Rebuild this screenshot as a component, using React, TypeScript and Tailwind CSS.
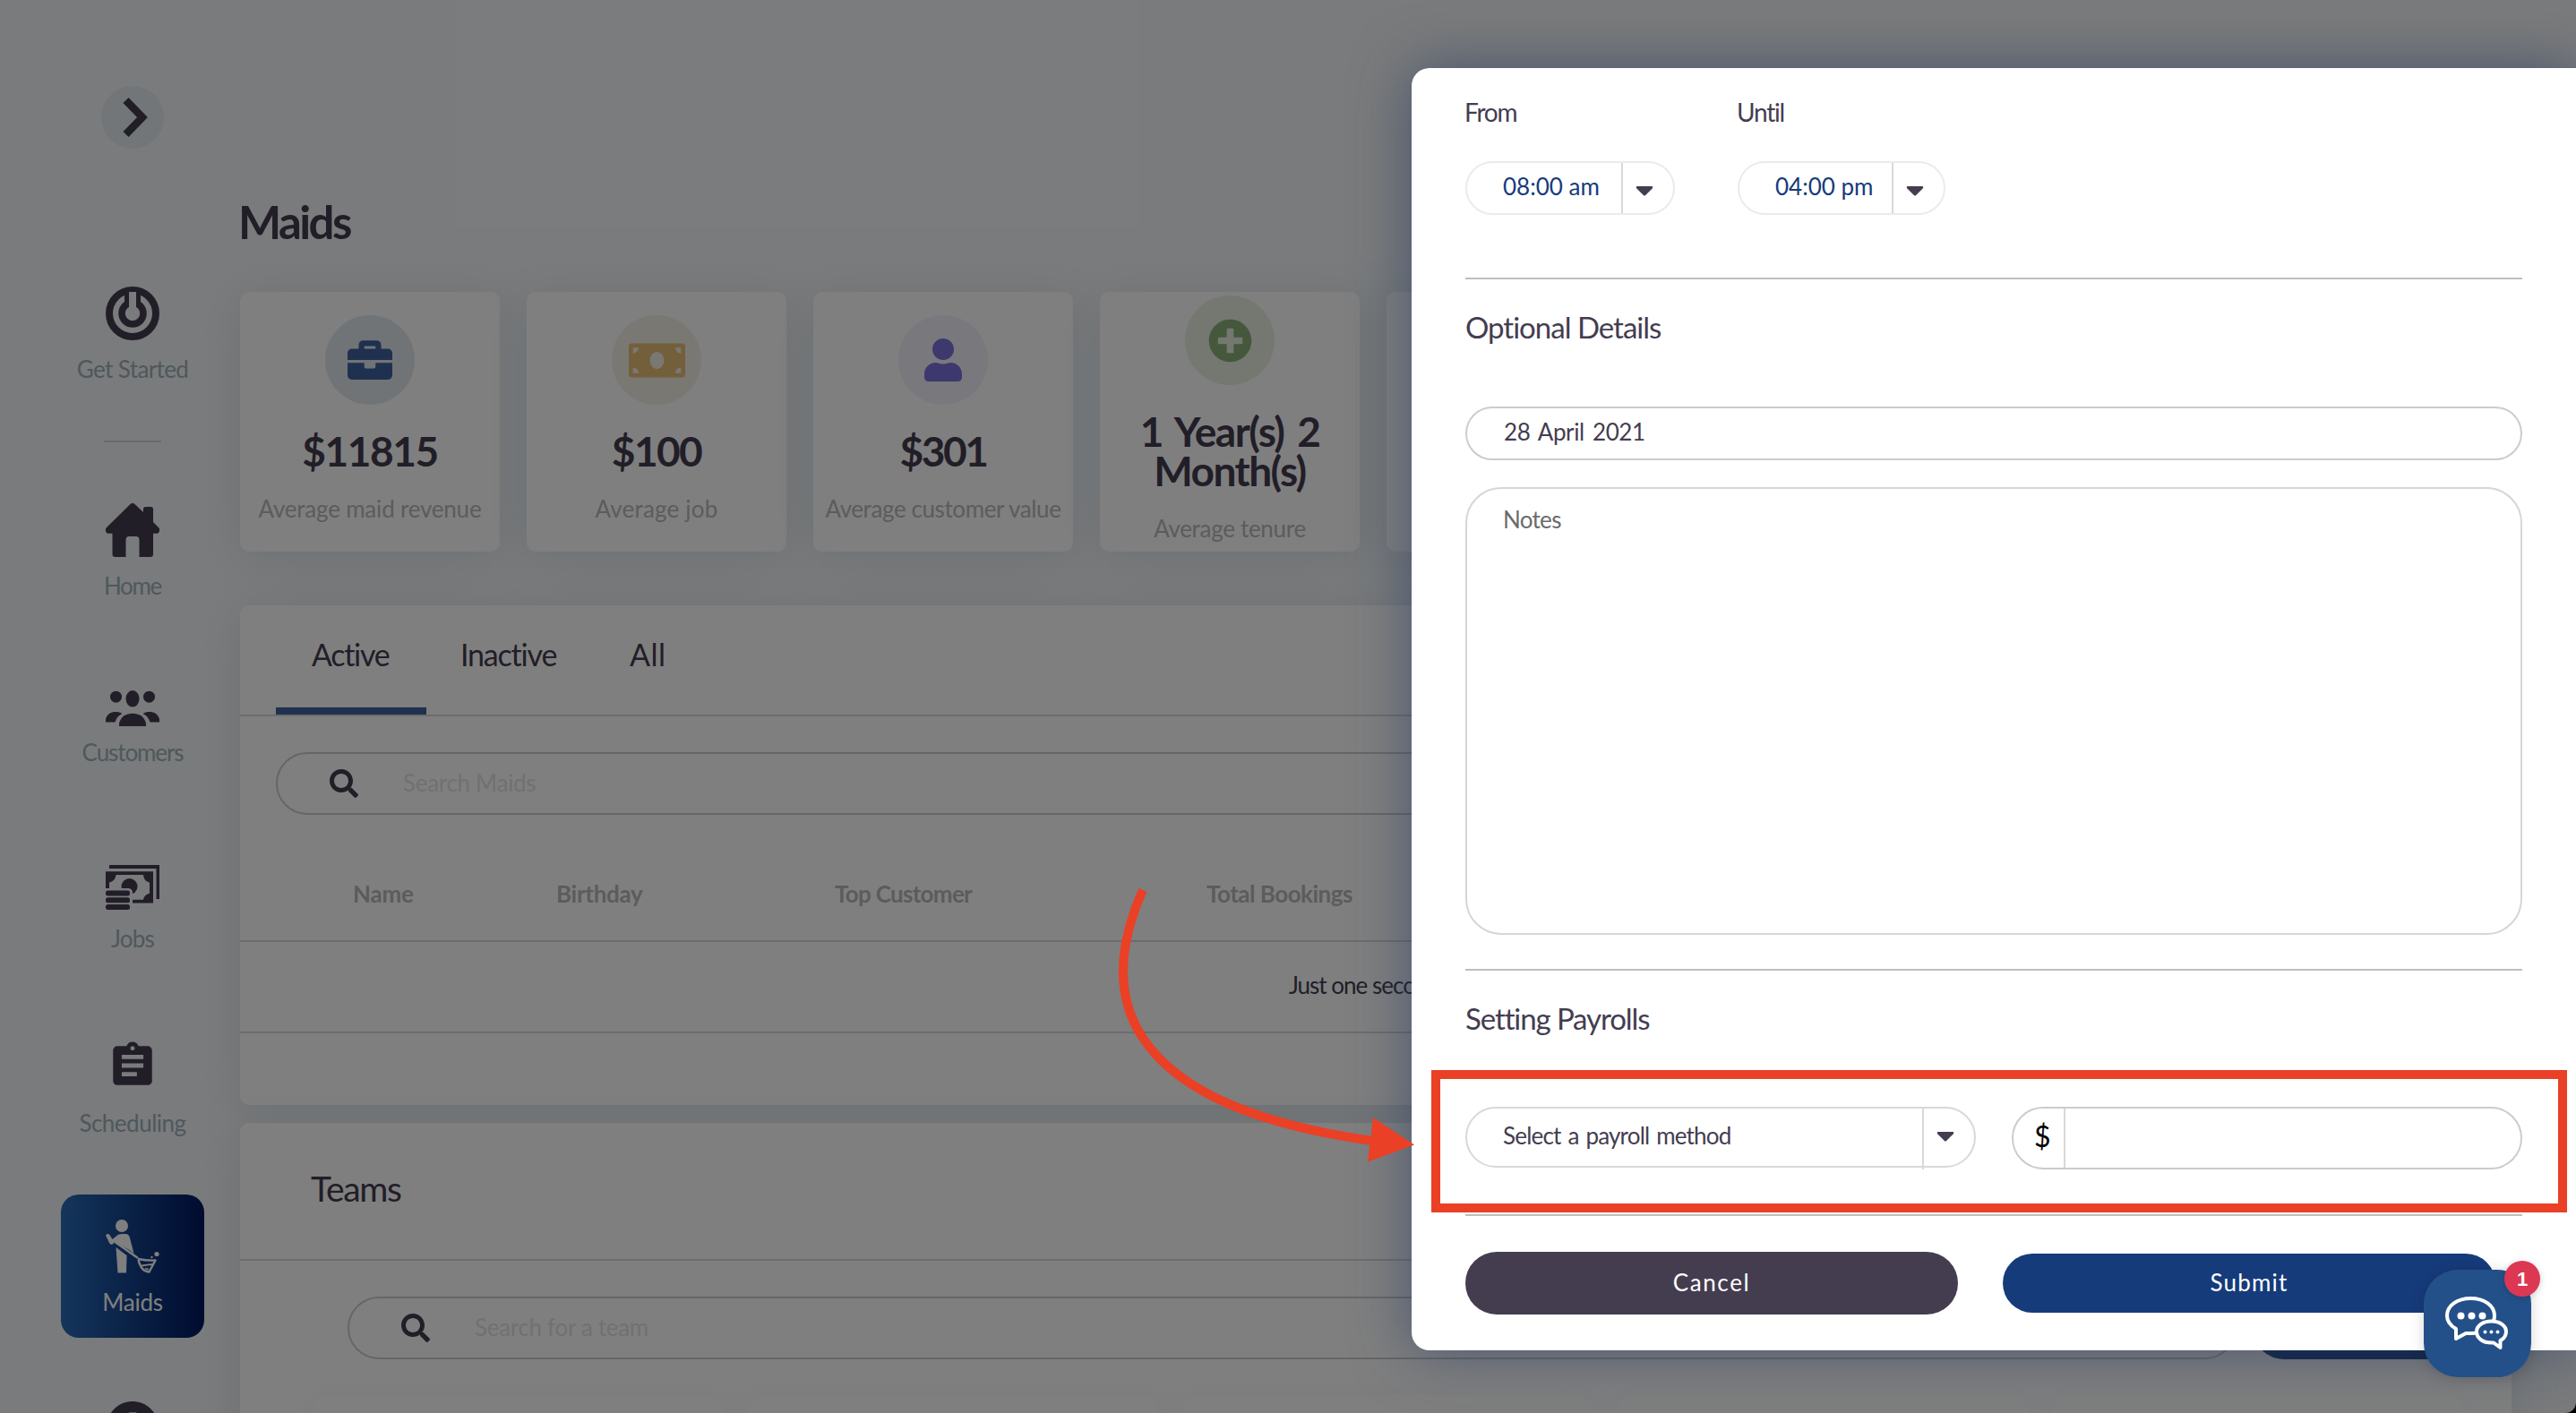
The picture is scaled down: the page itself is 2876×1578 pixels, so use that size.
import type { ReactNode } from 'react';
import { FaBriefcase, FaCaretDown, FaMoneyBill, FaPlusCircle, FaSearch, FaUser } from 'react-icons/fa';
import { MdAssignment } from 'react-icons/md';

interface StatCardProps {
    icon: ReactNode;
    circle: string;
    value: string;
    valueClass?: string;
    label: string;
    labelClass?: string;
}

function StartIcon() {
    return (
        <svg width="60" height="60" viewBox="0 0 60 60" fill="none">
            <circle cx="30" cy="30" r="26" stroke="#443d50" strokeWidth="8" />
            <rect x="21" y="4" width="18" height="16" fill="#443d50" />
            <circle cx="30" cy="30" r="12" stroke="#443d50" strokeWidth="7.5" />
            <path d="M26 6h8v18h-8z" fill="#f4f7f9" />
        </svg>
    );
}

function HomeIcon() {
    return (
        <svg width="60" height="60" viewBox="0 0 60 60" fill="#443d50">
            <path d="M27.5 1.1a3.6 3.6 0 0 1 5 0L42 10V6.5Q42 4 44.500 4h6Q53 4 53 6.500V21l6.200 6.200c2 2.400.8 6.600-2.700 6.600H53V57q0 3-3 3H37.500V41q0-4-4-4h-7q-4 0-4 4v19H10.500q-3 0-3-3V33.800h-4c-3.500 0-4.700-4.200-2.700-6.600z" />
        </svg>
    );
}

function CustomersIcon() {
    return (
        <svg width="60" height="40" viewBox="0 0 60 40" fill="#443d50">
            <circle cx="11.500" cy="7.200" r="6.500" />
            <circle cx="48.500" cy="7.200" r="6.500" />
            <ellipse cx="30" cy="9.300" rx="7.500" ry="9.300" />
            <path d="M0 35.500v-3C1 26.500 6 24 11 24c3 0 5.500.6 7.300 2-4 2-6.500 5-7.800 9.500zM60 35.500v-3C59 26.500 54 24 49 24c-3 0-5.500.6-7.300 2 4 2 6.500 5 7.800 9.500z" />
            <path d="M15 40v-3.500C17 29 23 25.700 30 25.700S43 29 45 36.500V40z" />
        </svg>
    );
}

function JobsIcon() {
    return (
        <svg width="60" height="50" viewBox="0 0 60 50" fill="#443d50">
            <path d="M4 0h56v38h-3.500V4H4z" />
            <path fillRule="evenodd" d="M0 7.300h53v35.200H0zM11.500 11C11 16 8 18.500 4 19.500V32c4 1 6.500 4 7 6.800h31c.5-3.500 3-6 7-7V19.500c-4-1-6.500-3.500-7-8.500z" />
            <circle cx="26.500" cy="24" r="9" />
            <path d="M0 26h26q4 1 4 5v19H0z" fill="#f4f7f9" />
            <rect y="28.500" width="27" height="6" rx="2.500" />
            <rect y="36.200" width="27" height="6" rx="2.500" />
            <rect y="43.900" width="27" height="6" rx="2.500" />
        </svg>
    );
}

function MaidIcon() {
    return (
        <svg width="60" height="60" viewBox="0 0 60 60" fill="#fff">
            <circle cx="18" cy="7" r="7" />
            <path d="M0 17.500Q1.500 15 4 16.500L7.500 22 14 16.700Q16 16 18.500 16h4q3 .2 4.200 3.500L31.500 38l-5-4L10.500 25 7 28q-2 0-3-2z" />
            <path d="M11.500 31 23.500 40 23 59.500H13.500z" />
            <path d="M10.500 25 36 43" stroke="#fff" strokeWidth="2.500" />
            <path d="M36 44Q47 46 55.500 45.500L48.500 58.500Q39.500 58 36.500 45" fill="none" stroke="#fff" strokeWidth="2.400" strokeLinejoin="round" />
            <path d="M40 51.500q6-1 12.500-1.500M44 54.500l4 1" fill="none" stroke="#fff" strokeWidth="1.800" />
            <circle cx="57" cy="38.500" r="2.600" />
            <circle cx="51.500" cy="42" r="1.200" />
        </svg>
    );
}

function ChatIcon() {
    return (
        <svg width="72" height="62" viewBox="0 -1 72 62" fill="#24508a" stroke="#fff" strokeWidth="4" strokeLinejoin="round">
            <path d="M28.500 2C43.500 2 55 10 55 21.500S43.500 41 28.500 41H23L12 47V36C6 32.500 2 27.500 2 21.500 2 10 13.500 2 28.500 2z" />
            <path d="M51.500 27.500c9.500 0 16.500 5 16.500 11.500 0 4.500-2.500 8-6.500 10v8L54 51.500h-2.500c-9.500 0-16.500-5-16.500-12.500 0-6.500 7-11.500 16.500-11.500z" />
            <g fill="#fff" stroke="none">
                <circle cx="17.500" cy="21.500" r="4" />
                <circle cx="29.500" cy="21.500" r="4" />
                <circle cx="41.500" cy="21.500" r="4" />
                <circle cx="44.500" cy="39.500" r="2" />
                <circle cx="51.500" cy="39.500" r="2" />
                <circle cx="58.500" cy="39.500" r="2" />
            </g>
        </svg>
    );
}

function NavLabel({ className, children }: { className: string; children: ReactNode }) {
    return <span className={`text-[26px] leading-8 whitespace-nowrap ${className}`}>{children}</span>;
}

function Sidebar() {
    return (
        <aside className="ml-[68px] flex w-[160px] shrink-0 flex-col items-center text-[#9db0b8]">
            <button className="mt-24 flex h-[70px] w-[70px] shrink-0 items-center justify-center rounded-full bg-[#e4edf1]">
                <svg width="28" height="44" viewBox="0 0 28 44" fill="none" className="ml-1.5">
                    <path d="M3.500 3 22 22 3.500 41" stroke="#443d50" strokeWidth="8.500" />
                </svg>
            </button>
            <div className="mt-[154px] flex flex-col items-center gap-4">
                <StartIcon />
                <NavLabel className="tracking-[-0.6px]">Get Started</NavLabel>
            </div>
            <div className="mt-16 h-0.5 w-16 shrink-0 bg-[#d3d8db]" />
            <div className="mt-[68px] flex flex-col items-center gap-4">
                <HomeIcon />
                <NavLabel className="tracking-[-1.3px]">Home</NavLabel>
            </div>
            <div className="mt-[101px] flex flex-col items-center gap-[13px]">
                <CustomersIcon />
                <NavLabel className="tracking-[-1.1px]">Customers</NavLabel>
            </div>
            <div className="mt-[110px] flex flex-col items-center gap-4">
                <JobsIcon />
                <NavLabel className="tracking-[-0.8px]">Jobs</NavLabel>
            </div>
            <div className="mt-[97px] flex flex-col items-center gap-[19px]">
                <MdAssignment size={58} color="#443d50" />
                <NavLabel className="tracking-[-0.5px]">Scheduling</NavLabel>
            </div>
            <div className="mt-16 flex h-[160px] w-[160px] shrink-0 flex-col items-center gap-4 rounded-[20px] bg-linear-to-r from-[#2b6bb8] to-[#041760] pt-7 text-white">
                <MaidIcon />
                <NavLabel className="tracking-[-0.2px]">Maids</NavLabel>
            </div>
            <FaPlusCircle size={60} color="#443d50" className="mt-[70px] shrink-0" />
        </aside>
    );
}

function StatCard({ icon, circle, value, valueClass = '', label, labelClass = '' }: StatCardProps) {
    return (
        <div className="flex h-[290px] w-[290px] shrink-0 flex-col items-center justify-center rounded-[10px] bg-white pb-1.5 text-center shadow-[0_6px_50px_rgba(150,170,185,0.28)]">
            <div className={`flex h-[100px] w-[100px] shrink-0 items-center justify-center rounded-full ${circle}`}>{icon}</div>
            <div className={`mt-[30px] w-[240px] text-[46px] leading-[44px] font-bold text-[#443d50] ${valueClass}`}>{value}</div>
            <div className={`mt-[26px] text-[26px] leading-8 whitespace-nowrap text-[#b8b8b8] ${labelClass}`}>{label}</div>
        </div>
    );
}

function SearchBox({ placeholder, className }: { placeholder: string; className: string }) {
    return (
        <div className={`flex h-[70px] items-center rounded-full border-2 border-[#cccccc] pl-[58px] ${className}`}>
            <FaSearch size={32} color="#443d50" />
            <span className="ml-[50px] pb-0.5 text-[26px] leading-8 tracking-[-0.3px] text-[#e2e2e2]">{placeholder}</span>
        </div>
    );
}

function MaidsPanel() {
    return (
        <section className="mt-[60px] h-[558px] shrink-0 rounded-[10px] bg-white shadow-[0_6px_50px_rgba(150,170,185,0.28)]">
            <div className="flex h-[124px] border-b-2 border-[#d8d8d8] pl-10 text-[34px] leading-10 text-[#443d50]">
                <div className="w-[168px] border-b-8 border-[#40629f] pt-[35px] pl-10 tracking-[-1.3px]">Active</div>
                <div className="w-[187px] pt-[35px] pl-[38px] tracking-[-1.2px]">Inactive</div>
                <div className="pt-[35px] pl-10 tracking-[0.5px]">All</div>
            </div>
            <SearchBox placeholder="Search Maids" className="mx-10 mt-10" />
            <div className="grid h-[142px] grid-cols-[227px_311px_415px_1fr] border-b-2 border-[#d8d8d8] pt-[72px] pl-[126px] text-[26px] leading-8 font-bold text-[#b8b8b8]">
                <span className="tracking-[-0.2px]">Name</span>
                <span className="tracking-[-0.3px]">Birthday</span>
                <span className="tracking-[-0.7px]">Top Customer</span>
                <span className="tracking-[-0.5px]">Total Bookings</span>
            </div>
            <div className="h-[102px] border-b-2 border-[#d8d8d8] pt-8 pl-[1171px] text-[26px] leading-8 tracking-[-1px] text-[#443d50]">
                Just one second...
            </div>
        </section>
    );
}

function TeamsPanel() {
    return (
        <section className="mt-5 h-[700px] shrink-0 rounded-t-[10px] bg-white shadow-[0_6px_50px_rgba(150,170,185,0.28)]">
            <h2 className="h-[154px] border-b-2 border-[#d8d8d8] pt-[50px] pl-[79px] text-[39px] leading-[46px] tracking-[-1.3px] text-[#443d50]">Teams</h2>
            <div className="mt-10 flex gap-[18px] pl-[120px]">
                <SearchBox placeholder="Search for a team" className="w-[2109px]" />
                <div className="h-[70px] w-[249px] rounded-full bg-[#224a88]" />
            </div>
            <div className="mt-10 flex gap-[27px] pl-20">
                {[0, 1, 2, 3, 4].map((i) => (
                    <div key={i} className="h-[200px] w-[459px] rounded-[20px] bg-white shadow-[0_0_30px_rgba(150,170,185,0.1)]" />
                ))}
            </div>
        </section>
    );
}

function TimeSelect({ label, labelClass, value, className }: { label: string; labelClass: string; value: string; className: string }) {
    return (
        <div>
            <div className={`text-[28px] leading-8 ${labelClass}`}>{label}</div>
            <div className={`mt-[39px] flex h-[60px] rounded-full border-2 border-[#ebebeb] ${className}`}>
                <span className="flex flex-1 items-center pb-1 pl-10 text-[26px] leading-8 whitespace-nowrap text-[#163b7b]">{value}</span>
                <span className="flex w-[58px] items-center border-l-2 border-[#d8d8d8] pt-1 pl-2">
                    <FaCaretDown size={32} />
                </span>
            </div>
        </div>
    );
}

function MaidModal() {
    return (
        <div className="absolute top-[76px] right-0 flex h-[1432px] w-[1300px] flex-col rounded-l-[20px] bg-white px-[60px] pt-[33px] text-[#443d50] shadow-[0_0_64px_rgba(40,60,97,0.62)]">
            <div className="flex gap-[70px]">
                <TimeSelect label="From" labelClass="-ml-px tracking-[-1.2px]" value="08:00 am" className="w-[234px]" />
                <TimeSelect label="Until" labelClass="-ml-px tracking-[-1.2px]" value="04:00 pm" className="w-[232px]" />
            </div>
            <div className="mt-[70px] h-0.5 shrink-0 bg-[#bebebe]" />
            <h3 className="mt-[33px] text-[33px] leading-10 tracking-[-1px]">Optional Details</h3>
            <div className="mt-[69px] flex h-[60px] shrink-0 items-center rounded-full border-2 border-[#cccccc] pb-1 pl-[41px] text-[26px] leading-8 tracking-[-0.4px] [word-spacing:3px]">28 April 2021</div>
            <div className="mt-[30px] h-[500px] shrink-0 rounded-[40px] border-2 border-[#d6d6d6] pt-[18px] pl-10 text-[26px] leading-8 tracking-[-0.7px] text-[#6b6b6b]">Notes</div>
            <div className="mt-[38px] h-0.5 shrink-0 bg-[#bebebe]" />
            <h3 className="mt-[33px] text-[33px] leading-10 tracking-[-1.1px]">Setting Payrolls</h3>
            <div className="mt-[79px] flex h-[70px] shrink-0 justify-between">
                <div className="flex h-[68px] w-[570px] rounded-full border-2 border-[#d8d8d8]">
                    <span className="flex flex-1 items-center pb-1 pl-10 text-[26px] leading-8 tracking-[-0.8px] [word-spacing:2px]">Select a payroll method</span>
                    <span className="flex h-[68px] w-[58px] items-center border-l-2 border-[#d8d8d8] pb-2 pl-2">
                        <FaCaretDown size={32} />
                    </span>
                </div>
                <div className="flex w-[570px] overflow-hidden rounded-full border-2 border-[#cccccc]">
                    <span className="flex w-[58px] items-center border-r-2 border-[#d8d8d8] pb-1 pl-[23px] text-[32px] text-black">$</span>
                </div>
            </div>
            <div className="mt-[50px] h-0.5 shrink-0 bg-[#bebebe]" />
            <div className="mt-10 flex items-center gap-[50px] text-[26px] leading-8 text-white">
                <button className="h-[70px] w-[550px] rounded-full bg-[#443d50] pb-0.5 tracking-[1.6px]">Cancel</button>
                <button className="h-[66px] w-[550px] rounded-full bg-[#163b7b] pb-0.5 tracking-[1.2px]">Submit</button>
            </div>
        </div>
    );
}

export default function App() {
    return (
        <div className="relative h-[1578px] w-[2876px] overflow-hidden bg-black font-['Lato',sans-serif]">
            <div className="flex h-full overflow-hidden rounded-br-[12px] bg-[#f4f7f9]">
                <Sidebar />
                <main className="ml-10 flex w-[2536px] shrink-0 flex-col">
                    <h1 className="mt-[218px] -ml-0.5 text-[51px] leading-[60px] font-bold tracking-[-2.6px] text-[#443d50]">Maids</h1>
                    <div className="mt-12 flex shrink-0 gap-[30px]">
                        <StatCard icon={<FaBriefcase size={50} color="#3f629e" />} circle="bg-[#e2e9ee]" value="$11815" valueClass="tracking-[-1.4px]" label="Average maid revenue" labelClass="tracking-[-0.2px]" />
                        <StatCard icon={<FaMoneyBill size={63} color="#e6be74" />} circle="bg-[#f5f0e5]" value="$100" valueClass="tracking-[-1.6px]" label="Average job" labelClass="tracking-[0.2px]" />
                        <StatCard icon={<FaUser size={48} color="#7b71dc" />} circle="bg-[#f3f0fa]" value="$301" valueClass="tracking-[-2.4px]" label="Average customer value" labelClass="tracking-[-0.4px]" />
                        <StatCard icon={<FaPlusCircle size={49} color="#8bb077" />} circle="bg-[#e9f0e2]" value="1 Year(s) 2 Month(s)" valueClass="tracking-[-1.5px] [word-spacing:5px]" label="Average tenure" labelClass="tracking-[-0.3px]" />
                        {[0, 1, 2, 3].map((i) => (
                            <div key={i} className="h-[290px] w-[290px] shrink-0 rounded-[10px] bg-white shadow-[0_6px_50px_rgba(150,170,185,0.28)]" />
                        ))}
                    </div>
                    <MaidsPanel />
                    <TeamsPanel />
                </main>
            </div>

            {/* Backdrop */}
            <div className="absolute inset-0 bg-black/50" />
            <MaidModal />

            {/* Payroll callout */}
            <div className="absolute top-[1195px] left-[1598px] h-[159px] w-[1268px] border-10 border-[#ea4025]" />
            <svg className="absolute top-[980px] left-[1230px]" width="360" height="330" viewBox="1230 980 360 330" fill="none">
                <path d="M1276 994C1207 1148 1303 1242 1532 1274" stroke="#ea4025" strokeWidth="10" />
                <path d="M1533 1248 1579 1278.500 1527 1297.500z" fill="#ea4025" />
            </svg>

            {/* Chat launcher */}
            <div className="absolute top-[1418px] left-[2706px] flex h-[120px] w-[120px] items-center justify-center rounded-[38px] bg-[#24508a] shadow-[0_2px_16px_rgba(0,0,0,0.16)]">
                <ChatIcon />
                <span className="absolute -top-2.5 -right-2.5 flex h-10 w-10 items-center justify-center rounded-full bg-[#dc3753] font-['Liberation_Sans',sans-serif] text-[22px] font-bold text-white shadow-[0_2px_8px_rgba(0,0,0,0.16)]">
                    1
                </span>
            </div>
        </div>
    );
}
